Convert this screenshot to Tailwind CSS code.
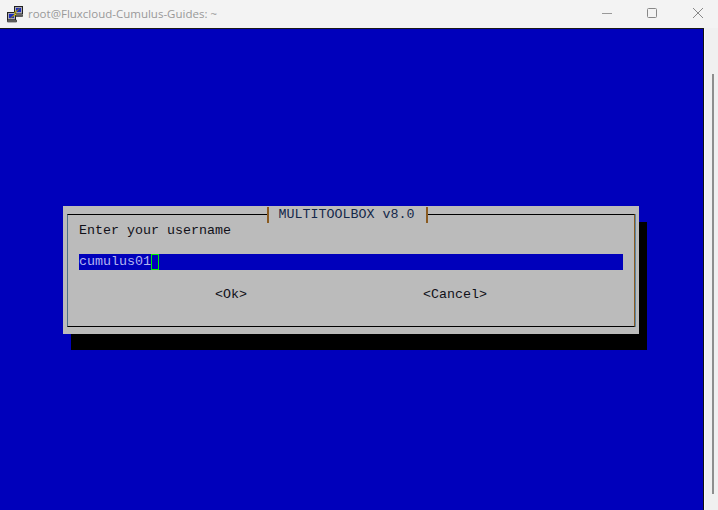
<!DOCTYPE html>
<html lang="en">
  <head>
    <meta charset="UTF-8" />
    <title>root@Fluxcloud-Cumulus-Guides: ~</title>
    <script src="https://cdn.jsdelivr.net/npm/@tailwindcss/browser@4"></script>
  </head>
  <body class="w-[718px] h-[510px] overflow-hidden bg-[#f0f0f0] flex flex-col">
    <!-- title bar -->
    <div class="h-[28px] flex items-center shrink-0 bg-[#f3f3f3]">
      <svg class="ml-[6px] mb-[1px] w-[18px] h-[18px]" viewBox="0 0 18 18">
        <rect x="8.5" y="1.5" width="8" height="7.5" fill="#a8a8b4" stroke="#222" />
        <rect x="10" y="3" width="5" height="4" fill="#1c2cc0" />
        <path d="M9 10H16.5V11.5H9Z" fill="#777" stroke="#222" stroke-width="0.6" />
        <rect x="1.5" y="7.5" width="8" height="7.5" fill="#a8a8b4" stroke="#222" />
        <rect x="3" y="9" width="5" height="4" fill="#1c2cc0" />
        <path d="M1.5 15H10.5V17H1.5Z" fill="#777" stroke="#222" stroke-width="0.6" />
        <path d="M13.5 3.5 L8 7.5 L9.5 8.5 L4.5 13 L10.5 9.5 L9.2 8 Z" fill="#ffe81a" stroke="#7a7000" stroke-width="0.5" />
      </svg>
      <span class="ml-[4px] font-['Open_Sans',sans-serif] text-[11.5px] leading-none text-[#999999]">root@Fluxcloud-Cumulus-Guides: ~</span>
      <div class="ml-auto flex items-center mb-[2px]">
        <svg class="w-[12px] h-[12px] mr-[33px]" viewBox="0 0 12 12"><path d="M1 6.5H11" stroke="#999" fill="none" /></svg>
        <svg class="w-[12px] h-[12px] mr-[34px]" viewBox="0 0 12 12"><rect x="1.5" y="1.5" width="9" height="9" rx="1" stroke="#888" fill="none" /></svg>
        <svg class="w-[12px] h-[12px] mr-[14px]" viewBox="0 0 12 12"><path d="M1 1L11 11M11 1L1 11" stroke="#888" fill="none" /></svg>
      </div>
    </div>
    <div class="h-px bg-[#1a1a1a] shrink-0 mr-[14px]"></div>

    <div class="flex flex-1 min-h-0">
      <!-- terminal -->
      <div class="w-[704px] bg-[#0000bb] pl-[63px] pt-[177px] border-r border-[#111]">
        <div class="relative w-[576px] h-[128px]">
          <div class="absolute left-[8px] top-[16px] w-[576px] h-[128px] bg-black"></div>
          <div class="relative w-[576px] h-[128px] bg-[#bbbbbb] pt-[8px] px-[4px] pb-[8px] font-['Liberation_Mono',monospace] text-[13.33px] leading-[16px] text-[#101018]">
            <div class="relative h-[113px] border border-t-black border-b-black border-l-[#4f7288] border-r-[#8a5a20] shadow-[1px_0_0_#5a86a4] pt-[8px] pl-[11px]">
              <div class="absolute left-[199px] -top-[8px] h-[16px] w-[161px] pr-[2px] flex items-center justify-center bg-[#bbbbbb] border-l-2 border-r-2 border-x-[#8a5a20] text-[#14284a]">MULTITOOLBOX v8.0</div>
              <div class="h-[16px]">Enter your username</div>
              <div class="mt-[15px] h-[16px] w-[544px] bg-[#0000bb] flex text-[#b4b4f0]">
                <span>cumulus01</span><span class="w-[8px] h-[16px] border border-[#00ee00]"></span>
              </div>
              <div class="mt-[17px] flex h-[16px]">
                <span class="ml-[136px]">&lt;Ok&gt;</span>
                <span class="ml-[176px]">&lt;Cancel&gt;</span>
              </div>
            </div>
          </div>
        </div>
      </div>
      <!-- scrollbar -->
      <div class="flex-1 bg-[#f0f0f0] border-l border-[#fafafa] pl-[7px] pt-[45px] pb-[16px]">
        <div class="w-[2px] h-full bg-[#8e8e8e]"></div>
      </div>
    </div>
  </body>
</html>
